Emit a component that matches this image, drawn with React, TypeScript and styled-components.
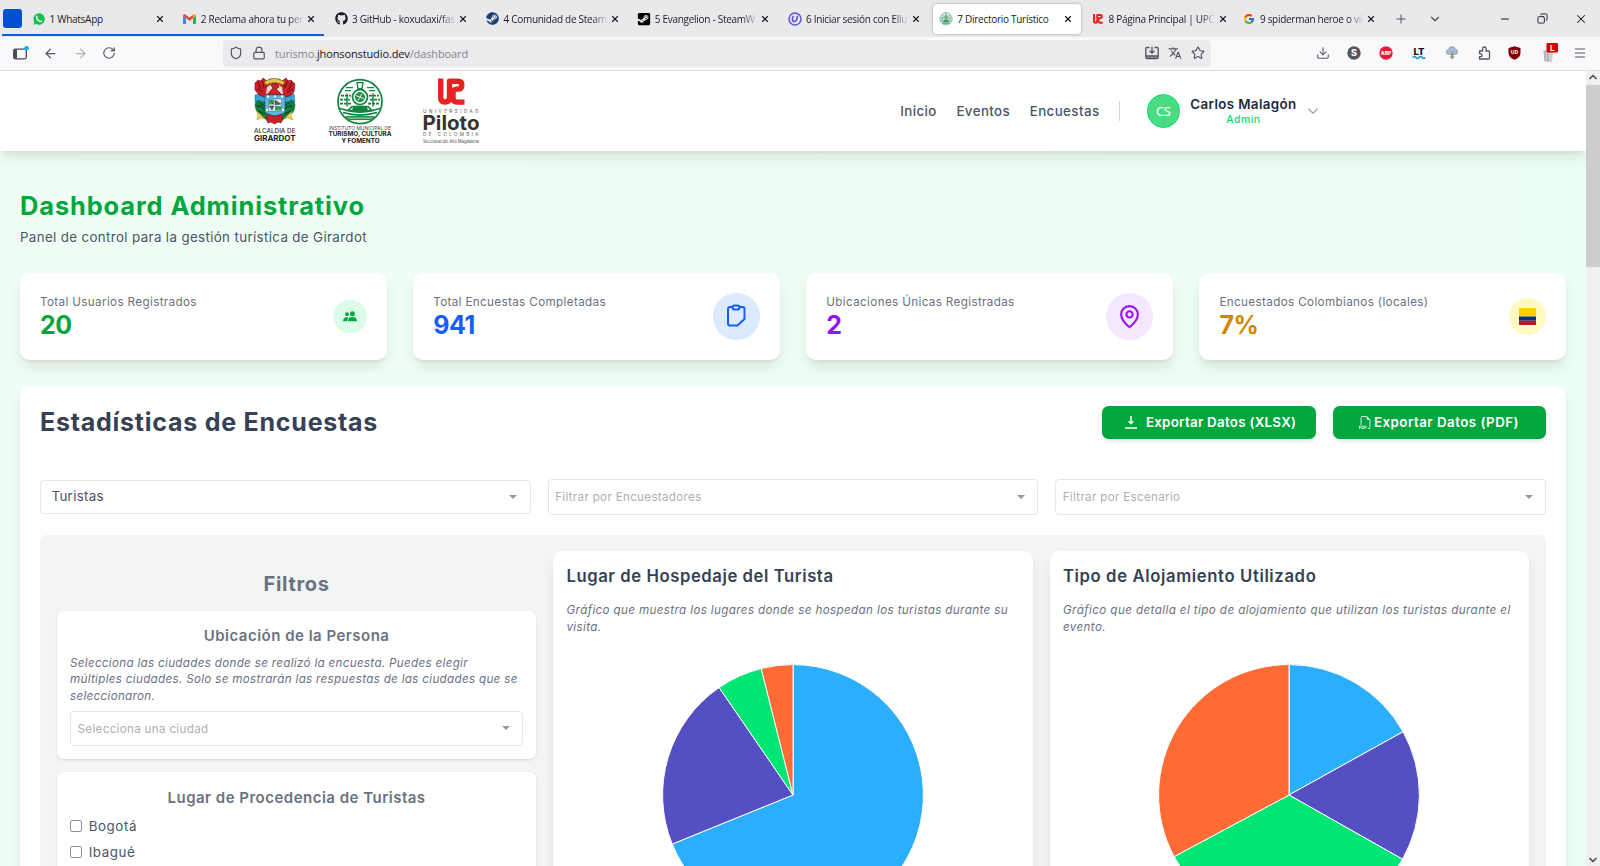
import React from "react";
import styled, { createGlobalStyle } from "styled-components";
import {
  ArrowLeft, ArrowRight, RotateCw, Shield, Lock, Star, Plus, ChevronDown, ChevronUp,
  Minus, Copy, X, Download, Menu, MapPin,
} from "lucide-react";
import { FaGithub, FaSteam, FaSteamSquare } from "react-icons/fa";
import { FcGoogle } from "react-icons/fc";
import { MdTranslate } from "react-icons/md";
import { BsFiletypePdf } from "react-icons/bs";

const GlobalStyle = createGlobalStyle`
  * { box-sizing: border-box; }
  body { margin: 0; overflow: hidden; font-family: Inter, "Open Sans", sans-serif; }
  h1, h2, h3, p { margin: 0; }
  svg { display: block; flex: none; }
`;

/* ---------- Browser window ---------- */

const Window = styled.div`
  width: 1600px;
  height: 866px;
  display: flex;
  flex-direction: column;
  overflow: hidden;
`;

const TabBar = styled.div`
  position: relative;
  height: 37px;
  flex: none;
  display: flex;
  align-items: center;
  padding-left: 2.5px;
  background: #e9e9ec;
  color: #1c1b22;
  font-family: "Open Sans", "Noto Sans", sans-serif;
`;

const PinnedTab = styled.div`
  width: 19px;
  height: 19px;
  margin-right: 4px;
  border-radius: 3px;
  background: #0250d0;
`;

const GroupLine = styled.div`
  position: absolute;
  left: 2px;
  top: 34px;
  width: 322px;
  height: 2px;
  background: #0f5fd6;
`;

const TabBox = styled.div<{ $active?: boolean }>`
  width: 147.3px;
  height: 30px;
  margin-right: 4px;
  padding: 0 8px 0 6px;
  display: flex;
  align-items: center;
  gap: 3px;
  border-radius: 4px;
  background: ${(p) => (p.$active ? "#fff" : "transparent")};
  box-shadow: ${(p) => (p.$active ? "0 0 3px rgba(0,0,0,.3)" : "none")};
`;

const TabLabel = styled.span<{ $fade?: boolean }>`
  flex: 1;
  white-space: nowrap;
  font-size: 10px;
  line-height: 16px;
  letter-spacing: -0.28px;
  mask-image: ${(p) => (p.$fade ? "linear-gradient(90deg, #000 86%, transparent 101%)" : "none")};
`;

const Favicon = styled.span`
  width: 14px;
  height: 14px;
  margin-right: 1px;
  flex: none;
  display: grid;
  place-items: center;
`;

const TabActions = styled.div`
  display: flex;
  align-items: center;
  gap: 20px;
  margin-left: 7px;
  color: #4a4a52;
`;

const WindowButtons = styled.div`
  margin-left: auto;
  padding-right: 12px;
  display: flex;
  align-items: center;
  gap: 26px;
`;

const RestoreIcon = styled(Copy)`
  transform: scaleX(-1);
`;

const Toolbar = styled.div`
  height: 34px;
  flex: none;
  display: flex;
  align-items: center;
  padding: 0 13px 1px 13px;
  background: #f9f9fb;
  border-bottom: 1px solid #dedee1;
  color: #55555d;
  font-family: "Open Sans", "Noto Sans", sans-serif;
`;

const NavButtons = styled.div`
  width: 210px;
  display: flex;
  align-items: center;
  gap: 14.3px;
`;

const UrlField = styled.div`
  width: 988px;
  height: 27px;
  display: flex;
  align-items: center;
  gap: 9px;
  padding: 0 6.5px 0 6px;
  border-radius: 4px;
  background: #ebebee;
`;

const UrlText = styled.span`
  flex: 1;
  padding-top: 1px;
  font-size: 11px;
  letter-spacing: -0.12px;
  color: #85858c;
  b { font-weight: 400; color: #15141a; }
`;

const Extensions = styled.div`
  margin-left: auto;
  display: flex;
  align-items: center;
  gap: 17.4px;
`;

const Viewport = styled.div`
  flex: 1;
  min-height: 0;
  display: flex;
`;

const Scrollbar = styled.div`
  width: 14px;
  display: flex;
  flex-direction: column;
  align-items: center;
  justify-content: space-between;
  background: #f0f0f0;
  color: #505050;
`;

const ScrollTop = styled.div`
  width: 14px;
  display: flex;
  flex-direction: column;
  align-items: center;
  gap: 2px;
`;

const ScrollThumb = styled.div`
  width: 14px;
  height: 182px;
  background: #cdcdcd;
`;

/* ---------- Site ---------- */

const Page = styled.div`
  flex: 1;
  min-width: 0;
  overflow: hidden;
  background: linear-gradient(90deg, #f0fdf4, #ecfdf3);
`;

const Header = styled.header`
  height: 80px;
  display: flex;
  align-items: center;
  justify-content: space-between;
  padding: 0 264px 0 254px;
  background: #fff;
  box-shadow: 0 8px 13px -2px rgba(0, 0, 0, 0.1), 0 3px 5px -3px rgba(0, 0, 0, 0.1);
`;

const Logos = styled.div`
  display: flex;
  gap: 30px;
`;

const Nav = styled.nav`
  display: flex;
  align-items: center;
`;

const NavLink = styled.a`
  margin-right: 19.6px;
  font-size: 13.33px;
  font-weight: 500;
  letter-spacing: 0.4px;
  color: #4a5565;
`;

const Divider = styled.span`
  width: 1px;
  height: 20px;
  margin-right: 27px;
  background: #d1d5dc;
`;

const Avatar = styled.div`
  width: 33.3px;
  height: 33.3px;
  margin-right: 10px;
  border-radius: 50%;
  border: 1px solid #05df72;
  background: #4adc83;
  color: #fff;
  display: flex;
  align-items: center;
  justify-content: center;
  padding-right: 1px;
  font: 13px "Noto Sans", sans-serif;
  letter-spacing: -0.4px;
`;

const UserText = styled.div`
  display: flex;
  flex-direction: column;
  align-items: center;
  margin: 1px 7.5px 0 0;
`;

const UserName = styled.span`
  font-size: 13.33px;
  line-height: 16px;
  font-weight: 600;
  letter-spacing: 0.37px;
  color: #1e2939;
`;

const UserRole = styled.span`
  padding-top: 1px;
  font-size: 10.4px;
  line-height: 14px;
  font-weight: 500;
  letter-spacing: 0.5px;
  color: #05df72;
`;

const Main = styled.main`
  padding: 40px 20px 0;
`;

const Title = styled.h1`
  font-size: 25.4px;
  line-height: 30px;
  font-weight: 700;
  letter-spacing: 0.9px;
  color: #00a63e;
`;

const Subtitle = styled.p`
  margin: 6.2px 0 25.8px;
  font-size: 13.33px;
  line-height: 20px;
  letter-spacing: 0.36px;
  color: #4a5565;
`;

const StatGrid = styled.div`
  display: grid;
  grid-template-columns: repeat(4, 1fr);
  gap: 26.67px;
`;

const StatCard = styled.div`
  height: 86.7px;
  padding: 20px;
  display: flex;
  align-items: center;
  justify-content: space-between;
  border-radius: 10px;
  background: #fff;
  box-shadow: 0 8px 13px -2px rgba(0, 0, 0, 0.1), 0 3px 5px -3px rgba(0, 0, 0, 0.1);
`;

const StatLabel = styled.p`
  padding-top: 1.2px;
  margin-bottom: -0.7px;
  font-size: 11.67px;
  line-height: 16.67px;
  letter-spacing: 0.36px;
  color: #6a7282;
`;

const StatValue = styled.p<{ $color: string }>`
  font-size: 25px;
  line-height: 30px;
  font-weight: 700;
  letter-spacing: -0.4px;
  color: ${(p) => p.$color};
`;

const StatIcon = styled.div<{ $size: number; $bg: string; $color: string }>`
  width: ${(p) => p.$size}px;
  height: ${(p) => p.$size}px;
  border-radius: 50%;
  display: grid;
  place-items: center;
  background: ${(p) => p.$bg};
  color: ${(p) => p.$color};
`;

const Panel = styled.section`
  margin-top: 26.67px;
  padding: 20px;
  height: 700px;
  border-radius: 10px;
  background: #fff;
  box-shadow: 0 8px 13px -2px rgba(0, 0, 0, 0.1), 0 3px 5px -3px rgba(0, 0, 0, 0.1);
`;

const PanelHead = styled.div`
  height: 33.3px;
  display: flex;
  justify-content: space-between;
  margin-bottom: 39.6px;
`;

const PanelTitle = styled.h2`
  font-size: 25px;
  line-height: 33px;
  font-weight: 700;
  letter-spacing: 0.76px;
  color: #364153;
`;

const Actions = styled.div`
  display: flex;
  gap: 16.67px;
`;

const ExportButton = styled.button<{ $gap: number; $track: number; $shift?: number }>`
  width: 213.5px;
  height: 33px;
  padding: 0 0 1px ${(p) => p.$shift ?? 0}px;
  border: 0;
  border-radius: 6.67px;
  display: flex;
  align-items: center;
  justify-content: center;
  gap: ${(p) => p.$gap}px;
  background: #00a63e;
  color: #fff;
  font: 600 13.33px Inter, sans-serif;
  letter-spacing: ${(p) => p.$track}px;
  box-shadow: 0 3px 5px -1px rgba(0, 0, 0, 0.12);
`;

const SelectRow = styled.div`
  display: grid;
  grid-template-columns: repeat(3, 1fr);
  align-items: center;
  gap: 16.67px;
  margin-bottom: 20px;
`;

const SelectBox = styled.div<{ $filled?: boolean; $height?: number }>`
  height: ${(p) => p.$height ?? 35.4}px;
  padding: 0 12.5px 0 ${(p) => (p.$filled ? 10.5 : 6.6)}px;
  display: flex;
  align-items: center;
  justify-content: space-between;
  border: 1px solid #e5e7eb;
  border-radius: 4px;
  background: #fff;
  font-size: ${(p) => (p.$filled ? 13.33 : 11.67)}px;
  letter-spacing: 0.3px;
  color: ${(p) => (p.$filled ? "#4a5565" : "#b0b0b0")};
`;

const SelectText = styled.span<{ $up?: number; $down?: number }>`
  padding: ${(p) => p.$down ?? 0}px 0 ${(p) => p.$up ?? 0}px;
`;

const Caret = styled.span`
  border: 4px solid transparent;
  border-top-color: #999;
  border-bottom: 0;
`;

const Board = styled.div`
  height: 600px;
  padding: 16.67px;
  display: grid;
  grid-template-columns: repeat(3, 1fr);
  gap: 16.67px;
  border-radius: 6.67px;
  background: #f3f4f6;
`;

const Filters = styled.div`
  padding-top: 19.9px;
  display: flex;
  flex-direction: column;
  gap: 13.33px;
`;

const FiltersTitle = styled.h2`
  font-size: 20px;
  line-height: 26.67px;
  font-weight: 700;
  letter-spacing: 0.65px;
  text-align: center;
  color: #6a7282;
`;

const FilterCard = styled.div`
  padding: 13.33px;
  border-radius: 6.67px;
  background: #fff;
  box-shadow: 0 1px 3px rgba(0, 0, 0, 0.1), 0 1px 2px -1px rgba(0, 0, 0, 0.1);
`;

const FilterTitle = styled.h3`
  margin-bottom: 6.9px;
  font-size: 15px;
  line-height: 23.33px;
  font-weight: 600;
  letter-spacing: 0.49px;
  text-align: center;
  color: #6a7282;
`;

const Note = styled.p<{ $below: number; $track: number }>`
  margin-bottom: ${(p) => p.$below}px;
  font-size: 11.67px;
  line-height: 16.67px;
  font-style: italic;
  white-space: nowrap;
  letter-spacing: ${(p) => p.$track}px;
  color: #6a7282;
`;

const CheckRow = styled.label`
  height: 20px;
  margin-bottom: 5.8px;
  display: flex;
  align-items: center;
  gap: 6.7px;
  font-size: 13.33px;
  letter-spacing: 0.6px;
  color: #4a5565;
`;

const Box = styled.span`
  width: 12px;
  height: 12px;
  border: 1px solid #8f8f9d;
  border-radius: 2px;
  background: #fff;
`;

const ChartCard = styled.div`
  padding: 13.6px 13.33px;
  border-radius: 10px;
  background: #fff;
  box-shadow: 0 8px 13px -2px rgba(0, 0, 0, 0.1), 0 3px 5px -3px rgba(0, 0, 0, 0.1);
`;

const ChartTitle = styled.h3<{ $track: number }>`
  margin-bottom: 13.75px;
  font-size: 16.67px;
  line-height: 23.33px;
  font-weight: 600;
  letter-spacing: ${(p) => p.$track}px;
  color: #364153;
`;

const ChartArea = styled.div`
  display: flex;
  justify-content: center;
`;

/* ---------- Drawings ---------- */

type Slice = { to: number; color: string };

function Pie({ slices }: { slices: Slice[] }) {
  const r = 130.4;
  const point = (deg: number) => {
    const a = (deg * Math.PI) / 180;
    return `${132 + r * Math.sin(a)} ${132 - r * Math.cos(a)}`;
  };
  return (
    <svg width="264" height="264" viewBox="0 0 264 264">
      {slices.map((s, i) => {
        const from = i ? slices[i - 1].to : 0;
        return (
          <path
            key={s.color}
            d={`M132 132L${point(from)}A${r} ${r} 0 ${s.to - from > 180 ? 1 : 0} 1 ${point(s.to)}Z`}
            fill={s.color}
            stroke="#fff"
            strokeWidth="1"
            strokeLinejoin="round"
          />
        );
      })}
    </svg>
  );
}

const CityLogo = () => (
  <svg width="44" height="66" viewBox="0 0 44 66">
    <path d="M1 18l7-2h26l6 1 1 8-4 4H5l-4-4z" fill="#35a4dc" stroke="#1d5f85" strokeWidth=".5" />
    <path d="M1 6l3-3 3 1 2-3 4 3 3-2h9l3 2 4-3 2 3 3-1 4 4-1 8-4 4-5 1H10l-5-2-4-5z" fill="#cb1f2a" stroke="#6d1218" strokeWidth=".6" />
    <path d="M4 5l3 7M8 3l2 8M12 5v5M38 5l-3 7M34 3l-3 8M30 5v5M3 12l6 3M39 12l-6 3" stroke="#5d1115" strokeWidth=".9" />
    <path d="M10 5q10-7 21 0l-2 3q-8-5-17 0z" fill="#e3c54b" stroke="#766a20" strokeWidth=".6" />
    <path d="M13 10q7-6 15 0l1 7H12z" fill="#f3d5c8" />
    <path d="M17 8q6-3 8 2l-3 2 6 6H13l6-7z" fill="#d3222a" stroke="#4b1515" strokeWidth=".8" />
    <path d="M1 27l3-4 4 2h26l4-2 3 4q0 8-5 11l-8 5H13l-7-5q-5-4-5-11z" fill="#157a3a" stroke="#0a4a22" strokeWidth=".5" />
    <path d="M3 29q5-1 8 4M38 29q-5-1-8 4M4 34l7 3M37 34l-7 3M6 26l5 3M35 26l-5 3" stroke="#06381a" fill="none" />
    <path d="M11 18h20v17q-10 8-20 0z" fill="#58b9e8" stroke="#26556f" strokeWidth=".6" />
    <path d="M13 18.500h2v2h-2zM20 18.500h2v2h-2zM27 18.500h2v2h-2zM12 32h2v2h-2zM28 32h2v2h-2z" fill="#fff" />
    <path d="M14.500 22h13v12h-13z" fill="#e8f1ee" stroke="#3d6d80" strokeWidth=".5" />
    <path d="M15 22.500h5v5h-5zM21 29h6v4.500h-6z" fill="#3c9a62" />
    <path d="M21 23l6 4-6 1zM15 29h5l-2 4zM17 23l2 4" fill="#52606b" stroke="#333f48" strokeWidth=".5" />
    <path d="M3 34l5 5 3 3-4-1-4 2 1-4zM38 34l-5 5-3 3 4-1 5 2-2-4z" fill="#ecd24a" stroke="#a08c20" strokeWidth=".5" />
    <path d="M14 37q7 4 13 0l2 5-2 4-3-1-3.500 2-3.500-2-3 1-2-4z" fill="#c8202a" stroke="#64151a" strokeWidth=".6" />
    <text x="0" y="55.6" fontFamily="Inter" fontSize="6" fontWeight="500" fill="#333" textLength="41.5" lengthAdjust="spacingAndGlyphs">ALCALDIA DE</text>
    <text x="0" y="64" fontFamily="Inter" fontSize="7.8" fontWeight="700" fill="#222" textLength="41.5" lengthAdjust="spacingAndGlyphs">GIRARDOT</text>
  </svg>
);

const TourismEmblem = () => (
  <g fill="none" stroke="#12843f">
    <circle cx="32" cy="24" r="22" strokeWidth="1.7" />
    <path d="M12 31q20 7 40 0M15 35q17 5 34 0" strokeWidth="1.6" />
    <path d="M18 39h28l-3 3H21z" fill="#6fb889" strokeWidth="1" />
    <circle cx="32" cy="19.500" r="7.500" strokeWidth="1.8" />
    <circle cx="32" cy="19.500" r="4.600" fill="#2c9153" strokeWidth="1" />
    <path d="M28 18l8 3M34 16l-4 7" stroke="#e6f5ea" strokeWidth=".9" />
    <path d="M29 5h6l-1 6h-4zM18 10h7M39 10h7M17 13h6M41 13h6" strokeWidth="1.4" />
    <path d="M13 18h10M41 18h10M12 22h10M42 22h10M12 26h12M40 26h12" strokeWidth="1.8" strokeDasharray="3 1" />
    <path d="M19 16v13M45 16v13M24 29h16l4 4H20z" strokeWidth="1.5" />
    <path d="M25 30h14v4H25z" fill="#12843f" />
  </g>
);

const TourismLogo = () => (
  <svg width="64" height="66" viewBox="0 0 64 66" overflow="visible">
    <g transform="translate(0 .6)"><TourismEmblem /></g>
    <text x="1" y="52.8" fontFamily="Inter" fontSize="5" fill="#444" textLength="62" lengthAdjust="spacingAndGlyphs">INSTITUTO MUNICIPAL DE</text>
    <text x="0.5" y="59.2" fontFamily="Inter" fontSize="6.200" fontWeight="700" fill="#222" textLength="63" lengthAdjust="spacingAndGlyphs">TURISMO, CULTURA</text>
    <text x="13.500" y="65.600" fontFamily="Inter" fontSize="5.800" fontWeight="700" fill="#222" textLength="38" lengthAdjust="spacingAndGlyphs">Y FOMENTO</text>
  </svg>
);

const PilotoMark = () => (
  <g fill="none" stroke="#e8221f" strokeWidth="5.4" strokeLinejoin="round">
    <path d="M2.700 0v19q0 4.500 4.300 4.500 4.500 0 4.500-4.500V2.700H20q3.800 0 3.800 3.600 0 4.200-3.800 4.200h-1q-4 0-4 4v5q0 4 4 4h7.500" />
  </g>
);

const PilotoLogo = () => (
  <svg width="58" height="68" viewBox="0 0 58 68" overflow="visible">
    <g transform="translate(16 1.6)"><PilotoMark /></g>
    <text x="1" y="35.500" fontFamily="Inter" fontSize="4.600" fill="#555" textLength="55.500">UNIVERSIDAD</text>
    <text x="0.500" y="53" fontFamily="Inter" fontSize="20" fontWeight="700" fill="#39322f" textLength="57" lengthAdjust="spacingAndGlyphs">Piloto</text>
    <text x="1" y="59" fontFamily="Inter" fontSize="4.600" fill="#555" textLength="55.500">DE COLOMBIA</text>
    <text x="1" y="66" fontFamily="Inter" fontSize="4.300" fill="#444" textLength="56" lengthAdjust="spacingAndGlyphs">Seccional del Alto Magdalena</text>
  </svg>
);

const WhatsAppIcon = () => (
  <svg width="12" height="12" viewBox="0 0 12 12">
    <path d="M6 .3a5.700 5.700 0 1 1-2.700 10.700L.4 11.700l.8-2.800A5.700 5.700 0 0 1 6 .3z" fill="#12c24b" />
    <path d="M3.900 3.300c-.9 1 .2 2.900 1.300 3.900s2.700 1.800 3.400.9" fill="none" stroke="#fff" strokeWidth="1.400" strokeLinecap="round" />
  </svg>
);

const GmailIcon = () => (
  <svg width="13" height="10" viewBox="0 0 13 10">
    <path d="M0 1.500V9q0 1 1 1h2V4z" fill="#4285f4" />
    <path d="M13 1.500V9q0 1-1 1h-2V4z" fill="#34a853" />
    <path d="M0 1.500Q.5-.3 2.300.4L6.500 3.600 10.700.4Q12.500-.3 13 1.500L10 4 6.500 6.800 3 4z" fill="#ea4335" />
    <path d="M10 1v3l3-2.300Q12.700-.3 10.700.4z" fill="#fbbc04" />
  </svg>
);

const SwirlIcon = () => (
  <svg width="14" height="14" viewBox="0 0 14 14" fill="none" stroke="#5a55d6">
    <circle cx="7" cy="7" r="6" strokeWidth="1.500" />
    <path d="M5 4.500C3.800 8 4.600 9.600 6.200 9.600S9.500 7.500 9.300 4.300" strokeWidth="1.700" strokeLinecap="round" />
  </svg>
);

const SidebarIcon = () => (
  <svg width="16" height="15" viewBox="0 0 16 15">
    <rect x=".7" y="3.200" width="12.600" height="9.600" rx="1.500" fill="none" stroke="#4b4b53" strokeWidth="1.300" />
    <path d="M1 3.500h3v9H1z" fill="#4b4b53" />
    <circle cx="13.500" cy="2.300" r="2.300" fill="#00b3f4" />
  </svg>
);

const SavePageIcon = () => (
  <svg width="14" height="14" viewBox="0 0 14 14" fill="none" stroke="currentColor" strokeWidth="1.300" strokeLinejoin="round">
    <path d="M4.500 1.500H2q-1.200 0-1.200 1.200v8.600q0 1.200 1.200 1.200h10q1.200 0 1.200-1.200V2.700q0-1.200-1.200-1.200H9.500" />
    <path d="M7 .5v6.500M4.500 4.800L7 7.300l2.500-2.500M1 10h12" />
    <path d="M1 10.500h12v1.800H1z" fill="currentColor" stroke="none" opacity=".6" />
  </svg>
);

const ExtensionIcon = () => (
  <svg width="13" height="14" viewBox="0 0 13 14" fill="none" stroke="currentColor" strokeWidth="1.300" strokeLinejoin="round">
    <path d="M1.500 5h3V2.800a1.800 1.800 0 0 1 3.600 0V5h2.400q1 0 1 1v6q0 1-1 1H1.500v-2.300h1a1.500 1.500 0 0 0 0-3h-1z" />
  </svg>
);

const BadgeIcon = ({ color, label, size = 5.500 }: { color: string; label: string; size?: number }) => (
  <svg width="14" height="14" viewBox="0 0 14 14">
    <circle cx="7" cy="7" r="6.700" fill={color} />
    <text x="7" y={7 + size * 0.36} textAnchor="middle" fontFamily="Inter" fontSize={size} fontWeight="800" fill="#fff">{label}</text>
  </svg>
);

const LanguageToolIcon = () => (
  <svg width="18" height="14" viewBox="-2 0 18 14">
    <text x="7" y="8.500" textAnchor="middle" fontFamily="Inter" fontSize="9.500" fontWeight="800" fill="#111" textLength="11" lengthAdjust="spacingAndGlyphs">LT</text>
    <path d="M.8 11.500q1.600-2 3.100 0t3.100 0 3.100 0 3.100 0" fill="none" stroke="#2196d8" strokeWidth="1.700" />
  </svg>
);

const CloudIcon = () => (
  <svg width="15" height="14" viewBox="0 0 15 14">
    <path d="M3 8.500a2.600 2.600 0 0 1 0-5A4 4 0 0 1 10.500 3a2.900 2.900 0 0 1 .5 5.500z" fill="#a9b8d2" stroke="#8796b3" strokeWidth=".6" />
    <path d="M6 6.500h2.400v4h1.400L7.200 13.500 4.600 10.500H6z" fill="#8a9d78" />
  </svg>
);

const ShieldIcon = () => (
  <svg width="13" height="14" viewBox="0 0 13 14">
    <path d="M6.500.3l6 1.700v5q0 4.500-6 6.800Q.5 11.500.5 7V2z" fill="#800000" />
    <text x="6.500" y="8.300" textAnchor="middle" fontFamily="Inter" fontSize="5" fontWeight="700" fill="#fff">UD</text>
  </svg>
);

const LibraryIcon = () => (
  <svg width="17" height="20" viewBox="-3 0 17 20" overflow="visible">
    <path d="M1 7h10l-1 12H3z" fill="#d0d0d3" />
    <path d="M3 8v10M6 8v10" stroke="#99999f" strokeWidth="1" />
    <rect x="4.500" y="0" width="11.500" height="9.500" rx="1" fill="#d70000" />
    <text x="10.200" y="7.600" textAnchor="middle" fontFamily="Inter" fontSize="8" fontWeight="700" fill="#fff">L</text>
  </svg>
);

const PeopleIcon = () => (
  <svg width="14" height="11" viewBox="0 0 14 11" fill="currentColor">
    <circle cx="4" cy="3.200" r="1.900" />
    <circle cx="9.400" cy="2.700" r="2.500" />
    <path d="M0 10.300q.2-4 4-4 1 0 1.700.4-1.700 1.200-1.700 3.600z" />
    <path d="M4.800 10.300q.2-4.300 4.600-4.300t4.600 4.300z" />
  </svg>
);

const ClipboardIcon = () => (
  <svg width="20" height="24" viewBox="0 0 20 24" fill="none" stroke="currentColor" strokeWidth="2" strokeLinejoin="round">
    <path d="M6.500 3H4Q2 3 2 5v14.500q0 2 2 2h7.500L18.500 15V5q0-2-2-2h-3" />
    <rect x="6.500" y="1.500" width="7" height="4" rx="2" />
  </svg>
);

const DownloadIcon = () => (
  <svg width="12" height="14" viewBox="0 0 12 14">
    <path d="M6 1v6M0 13h12" fill="none" stroke="currentColor" strokeWidth="1.500" />
    <path d="M2.800 6.300h6.400L6 9.800z" fill="currentColor" />
  </svg>
);

const Flag = () => (
  <svg width="17" height="17" viewBox="0 0 17 17">
    <path d="M0 0h17v8.500H0z" fill="#ffcd00" />
    <path d="M0 8.500h17v4.200H0z" fill="#003087" />
    <path d="M0 12.700h17V17H0z" fill="#c8102e" />
  </svg>
);

/* ---------- Content ---------- */

const tabs = [
  { label: "1 WhatsApp", icon: <WhatsAppIcon /> },
  { label: "2 Reclama ahora tu per", icon: <GmailIcon />, fade: true },
  { label: "3 GitHub - koxudaxi/fas", icon: <FaGithub size={13} />, fade: true },
  { label: "4 Comunidad de Steam", icon: <FaSteam size={13} color="#173f78" />, fade: true },
  { label: "5 Evangelion - SteamW", icon: <FaSteamSquare size={14} color="#000" />, fade: true },
  { label: "6 Iniciar sesión con Ellu", icon: <SwirlIcon />, fade: true },
  { label: "7 Directorio Turístico", icon: <svg width="14" height="14" viewBox="8 0 48 50"><TourismEmblem /></svg>, active: true },
  { label: "8 Página Principal | UPC", icon: <svg width="10" height="10" viewBox="0 0 27 27"><PilotoMark /></svg>, fade: true },
  { label: "9 spiderman heroe o vil", icon: <FcGoogle size={12} />, fade: true },
];

const stats = [
  { label: "Total Usuarios Registrados", value: "20", color: "#00a63e", bg: "#dcfce7", size: 33.3, icon: <PeopleIcon /> },
  { label: "Total Encuestas Completadas", value: "941", color: "#155dfc", bg: "#dbeafe", size: 46.7, icon: <ClipboardIcon /> },
  { label: "Ubicaciones Únicas Registradas", value: "2", color: "#9810fa", bg: "#f3e8ff", size: 46.7, icon: <MapPin size={25} /> },
  { label: "Encuestados Colombianos (locales)", value: "7%", color: "#d08700", bg: "#fef9c2", size: 36.7, icon: <Flag /> },
];

const charts = [
  {
    title: "Lugar de Hospedaje del Turista",
    titleTrack: 0.58,
    track: 0.35,
    note: ["Gráfico que muestra los lugares donde se hospedan los turistas durante su", "visita."],
    slices: [
      { to: 247.9, color: "#2caeff" },
      { to: 325.5, color: "#554fc4" },
      { to: 345.9, color: "#00e673" },
      { to: 360, color: "#ff6b35" },
    ],
  },
  {
    title: "Tipo de Alojamiento Utilizado",
    titleTrack: 0.63,
    track: 0.39,
    note: ["Gráfico que detalla el tipo de alojamiento que utilizan los turistas durante el", "evento."],
    slices: [
      { to: 61, color: "#2caeff" },
      { to: 119.5, color: "#554fc4" },
      { to: 241.8, color: "#00e673" },
      { to: 360, color: "#ff6b35" },
    ],
  },
];

export default function App() {
  return (
    <Window>
      <GlobalStyle />
      <TabBar>
        <PinnedTab />
        {tabs.map((t) => (
          <TabBox key={t.label} $active={t.active}>
            <Favicon>{t.icon}</Favicon>
            <TabLabel $fade={t.fade}>{t.label}</TabLabel>
            <X size={10} strokeWidth={2.8} />
          </TabBox>
        ))}
        <TabActions>
          <Plus size={14} strokeWidth={1.6} />
          <ChevronDown size={14} strokeWidth={2} />
        </TabActions>
        <WindowButtons>
          <Minus size={12} />
          <RestoreIcon size={11} />
          <X size={14} strokeWidth={1.8} />
        </WindowButtons>
        <GroupLine />
      </TabBar>
      <Toolbar>
        <NavButtons>
          <SidebarIcon />
          <ArrowLeft size={15} strokeWidth={2} />
          <ArrowRight size={15} strokeWidth={2} color="#b5b5ba" />
          <RotateCw size={14} strokeWidth={2} />
        </NavButtons>
        <UrlField>
          <Shield size={14} strokeWidth={2} />
          <Lock size={14} strokeWidth={2} />
          <UrlText>turismo.<b>jhonsonstudio.dev</b>/dashboard</UrlText>
          <SavePageIcon />
          <MdTranslate size={14} />
          <Star size={14} />
        </UrlField>
        <Extensions>
          <Download size={14} strokeWidth={1.8} />
          <BadgeIcon color="#55555e" label="S" size={9} />
          <BadgeIcon color="#f0183c" label="ABP" size={5} />
          <LanguageToolIcon />
          <CloudIcon />
          <ExtensionIcon />
          <ShieldIcon />
          <LibraryIcon />
          <Menu size={14} strokeWidth={1.8} />
        </Extensions>
      </Toolbar>
      <Viewport>
        <Page>
          <Header>
            <Logos>
              <CityLogo />
              <TourismLogo />
              <PilotoLogo />
            </Logos>
            <Nav>
              <NavLink>Inicio</NavLink>
              <NavLink>Eventos</NavLink>
              <NavLink>Encuestas</NavLink>
              <Divider />
              <Avatar>CS</Avatar>
              <UserText>
                <UserName>Carlos Malagón</UserName>
                <UserRole>Admin</UserRole>
              </UserText>
              <ChevronDown size={18} strokeWidth={1.5} color="#99a1af" />
            </Nav>
          </Header>
          <Main>
            <Title>Dashboard Administrativo</Title>
            <Subtitle>Panel de control para la gestión turística de Girardot</Subtitle>
            <StatGrid>
              {stats.map((s) => (
                <StatCard key={s.label}>
                  <div>
                    <StatLabel>{s.label}</StatLabel>
                    <StatValue $color={s.color}>{s.value}</StatValue>
                  </div>
                  <StatIcon $size={s.size} $bg={s.bg} $color={s.color}>{s.icon}</StatIcon>
                </StatCard>
              ))}
            </StatGrid>
            <Panel>
              <PanelHead>
                <PanelTitle>Estadísticas de Encuestas</PanelTitle>
                <Actions>
                  <ExportButton $gap={9} $track={0.28} $shift={3}><DownloadIcon />Exportar Datos (XLSX)</ExportButton>
                  <ExportButton $gap={1.5} $track={0.48}><BsFiletypePdf size={13} />Exportar Datos (PDF)</ExportButton>
                </Actions>
              </PanelHead>
              <SelectRow>
                <SelectBox $filled $height={33.5}><SelectText $up={2}>Turistas</SelectText><Caret /></SelectBox>
                <SelectBox><SelectText>Filtrar por Encuestadores</SelectText><Caret /></SelectBox>
                <SelectBox><SelectText>Filtrar por Escenario</SelectText><Caret /></SelectBox>
              </SelectRow>
              <Board>
                <Filters>
                  <FiltersTitle>Filtros</FiltersTitle>
                  <FilterCard>
                    <FilterTitle>Ubicación de la Persona</FilterTitle>
                    <Note $below={6.4} $track={0.3}>
                      Selecciona las ciudades donde se realizó la encuesta. Puedes elegir<br />
                      múltiples ciudades. Solo se mostrarán las respuestas de las ciudades que se<br />
                      seleccionaron.
                    </Note>
                    <SelectBox $height={34.6}><SelectText $down={1.5}>Selecciona una ciudad</SelectText><Caret /></SelectBox>
                  </FilterCard>
                  <FilterCard>
                    <FilterTitle>Lugar de Procedencia de Turistas</FilterTitle>
                    <CheckRow><Box />Bogotá</CheckRow>
                    <CheckRow><Box />Ibagué</CheckRow>
                  </FilterCard>
                </Filters>
                {charts.map((c) => (
                  <ChartCard key={c.title}>
                    <ChartTitle $track={c.titleTrack}>{c.title}</ChartTitle>
                    <Note $below={27.45} $track={c.track}>{c.note[0]}<br />{c.note[1]}</Note>
                    <ChartArea><Pie slices={c.slices} /></ChartArea>
                  </ChartCard>
                ))}
              </Board>
            </Panel>
          </Main>
        </Page>
        <Scrollbar>
          <ScrollTop>
            <ChevronUp size={12} strokeWidth={3.5} />
            <ScrollThumb />
          </ScrollTop>
          <ChevronDown size={12} strokeWidth={3.5} />
        </Scrollbar>
      </Viewport>
    </Window>
  );
}
